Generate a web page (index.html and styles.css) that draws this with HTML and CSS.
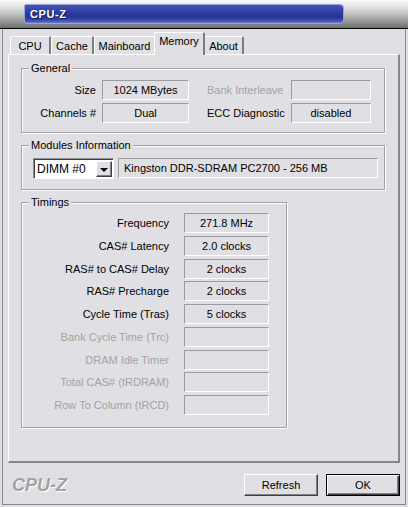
FILE: index.html
```html
<!DOCTYPE html>
<html>
<head>
<meta charset="utf-8">
<link rel="stylesheet" href="styles.css">
</head>
<body>
<div class="window">
  <div class="titlebar">
    <div class="caption">CPU-Z</div>
  </div>
  <div class="client">
    <div class="tabs">
      <div class="tab t-cpu">CPU</div>
      <div class="tab t-cache">Cache</div>
      <div class="tab t-main">Mainboard</div>
      <div class="tab t-mem active">Memory</div>
      <div class="tab t-about">About</div>
    </div>
    <div class="panel">
      <section class="group general">
        <span class="legend">General</span>
        <div class="gen-grid">
          <span class="lbl">Size</span>
          <span class="val">1024 MBytes</span>
          <span class="lbl2 disabled">Bank Interleave</span>
          <span class="val"></span>
          <span class="lbl">Channels #</span>
          <span class="val">Dual</span>
          <span class="lbl2">ECC Diagnostic</span>
          <span class="val">disabled</span>
        </div>
      </section>
      <section class="group modules">
        <span class="legend">Modules Information</span>
        <div class="mod-row">
          <div class="select">
            <span class="select-text">DIMM #0</span>
            <span class="select-btn"><span class="arrow"></span></span>
          </div>
          <span class="val info">Kingston DDR-SDRAM PC2700 - 256 MB</span>
        </div>
      </section>
      <section class="group timings">
        <span class="legend">Timings</span>
        <div class="tim-grid">
          <span class="lbl">Frequency</span><span class="val">271.8 MHz</span>
          <span class="lbl">CAS# Latency</span><span class="val">2.0 clocks</span>
          <span class="lbl">RAS# to CAS# Delay</span><span class="val">2 clocks</span>
          <span class="lbl">RAS# Precharge</span><span class="val">2 clocks</span>
          <span class="lbl">Cycle Time (Tras)</span><span class="val">5 clocks</span>
          <span class="lbl disabled">Bank Cycle Time (Trc)</span><span class="val"></span>
          <span class="lbl disabled">DRAM Idle Timer</span><span class="val"></span>
          <span class="lbl disabled">Total CAS# (tRDRAM)</span><span class="val"></span>
          <span class="lbl disabled">Row To Column (tRCD)</span><span class="val"></span>
        </div>
      </section>
    </div>
    <div class="footer">
      <span class="logo">CPU-Z</span>
      <div class="buttons">
        <button class="btn">Refresh</button>
        <button class="btn default">OK</button>
      </div>
    </div>
  </div>
</div>
</body>
</html>
```

FILE: styles.css
```css
* { box-sizing: border-box; }
html, body {
  margin: 0;
  padding: 0;
  background: #e0dfe3;
}
body {
  font-family: "Liberation Sans", Arial, sans-serif;
  font-size: 11px;
  color: #000;
}
.window {
  width: 408px;
  height: 507px;
  overflow: hidden;
  background: #e0dfe3;
}
.titlebar {
  height: 29px;
  padding: 4px 0 0 24px;
  background: linear-gradient(#fbfbfb 0%, #ececec 15%, #c9c9c9 45%, #8f8f8f 80%, #6c6c6c 100%);
  border-bottom: 1px solid #000;
}
.caption {
  width: 320px;
  height: 20px;
  border: 1px solid #9aa3d8;
  border-radius: 2px 4px 4px 2px;
  background: linear-gradient(#4656b8 0%, #2f3fa3 35%, #27358f 65%, #3a4ab0 85%, #6a78cf 100%);
  color: #fff;
  font-weight: bold;
  font-size: 11px;
  letter-spacing: 0.6px;
  line-height: 18px;
  padding-left: 5px;
  text-shadow: 1px 1px 0 #101850;
}
.client {
  margin: 0 2px;
  height: 476px;
  border-left: 1px solid #8a8a8a;
  border-right: 1px solid #8a8a8a;
  border-bottom: 1px solid #8a8a8a;
  padding: 3px 0 0 5px;
}
.tabs {
  display: flex;
  align-items: flex-end;
  height: 22px;
  padding-left: 2px;
  position: relative;
  z-index: 2;
}
.tab {
  height: 18px;
  border-top: 1px solid #fff;
  border-left: 1px solid #fff;
  border-right: 2px solid #7d7d80;
  border-radius: 2px 2px 0 0;
  text-align: center;
  line-height: 16px;
  padding-top: 1px;
}
.t-cpu { width: 41px; }
.t-cache { width: 43px; }
.t-main { width: 62px; }
.t-about { width: 40px; }
.tab.active {
  width: 51px;
  height: 23px;
  margin: 0 -1px -1px -2px;
  padding-top: 0;
  line-height: 17px;
  background: #e0dfe3;
  position: relative;
  z-index: 3;
}
.panel {
  width: 392px;
  height: 409px;
  border-top: 1px solid #fff;
  border-left: 1px solid #fff;
  border-right: 2px solid #85858a;
  border-bottom: 2px solid #85858a;
  padding: 13px 13px 0 12px;
}
.group {
  position: relative;
  border: 1px solid #a3a3a6;
  box-shadow: inset 1px 1px 0 #fff, 1px 1px 0 #fff;
}
.legend {
  position: absolute;
  top: -7px;
  left: 7px;
  padding: 0 2px;
  line-height: 13px;
  background: #e0dfe3;
}
.val {
  display: flex;
  align-items: center;
  justify-content: center;
  height: 20px;
  border-top: 1px solid #9b9b9f;
  border-left: 1px solid #9b9b9f;
  border-right: 1px solid #fff;
  border-bottom: 1px solid #fff;
  white-space: nowrap;
}
.lbl {
  text-align: right;
  white-space: nowrap;
  line-height: 20px;
}
.lbl2 {
  white-space: nowrap;
  line-height: 20px;
  padding-left: 18px;
}
.disabled { color: #a4a3a8; }

.general { padding: 11px 0 9px 0; }
.gen-grid {
  display: grid;
  grid-template-columns: 80px 87px 102px 80px;
  column-gap: 0;
  row-gap: 3px;
}
.gen-grid .lbl { padding-right: 6px; }

.modules {
  margin-top: 12px;
  padding: 12px 0 10px 11px;
}
.mod-row {
  display: flex;
  gap: 4px;
  align-items: flex-start;
}
.select {
  display: flex;
  width: 81px;
  height: 21px;
  background: #fff;
  border-top: 1px solid #8f8f93;
  border-left: 1px solid #8f8f93;
  border-right: 1px solid #fff;
  border-bottom: 1px solid #fff;
  box-shadow: inset 1px 1px 0 #404040;
  padding: 2px 1px 1px 3px;
}
.select-text {
  flex: 1;
  line-height: 16px;
  font-size: 12px;
}
.select-btn {
  width: 16px;
  height: 16px;
  background: #e0dfe3;
  border-top: 1px solid #fff;
  border-left: 1px solid #fff;
  border-right: 1px solid #404040;
  border-bottom: 1px solid #404040;
  box-shadow: inset -1px -1px 0 #808080;
  display: flex;
  align-items: center;
  justify-content: center;
}
.arrow {
  width: 0;
  height: 0;
  border-left: 4px solid transparent;
  border-right: 4px solid transparent;
  border-top: 4px solid #000;
  margin-top: 1px;
}
.info {
  width: 260px;
  justify-content: flex-start;
  padding-left: 5px;
}

.timings {
  width: 266px;
  margin-top: 12px;
  padding: 10px 0 12px 0;
}
.tim-grid {
  display: grid;
  grid-template-columns: 147px 85px;
  column-gap: 15px;
  grid-auto-rows: 20px;
  row-gap: 2.75px;
}

.footer {
  display: flex;
  justify-content: space-between;
  align-items: flex-start;
  height: 40px;
  padding: 11px 5px 0 4px;
  margin-left: -5px;
}
.logo {
  font-family: "Liberation Sans", Arial, sans-serif;
  font-weight: bold;
  font-style: italic;
  font-size: 18px;
  line-height: 20px;
  margin-top: 1px;
  margin-left: 5px;
  color: #a3a2a7;
  text-shadow: 1px 1px 0 #fff;
}
.buttons {
  display: flex;
  gap: 8px;
}
.btn {
  width: 74px;
  height: 22px;
  font-family: "Liberation Sans", Arial, sans-serif;
  font-size: 11px;
  color: #000;
  background: #e0dfe3;
  border-top: 1px solid #fff;
  border-left: 1px solid #fff;
  border-right: 1px solid #404040;
  border-bottom: 1px solid #404040;
  box-shadow: inset -1px -1px 0 #808080;
  padding: 0;
}
.btn.default {
  border: 1px solid #000;
  box-shadow: inset 1px 1px 0 #fff, inset -1px -1px 0 #404040, inset -2px -2px 0 #808080;
}
```
